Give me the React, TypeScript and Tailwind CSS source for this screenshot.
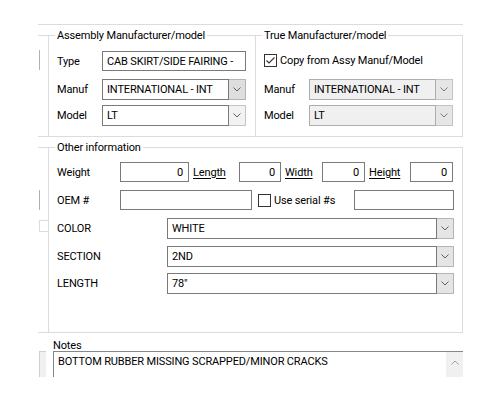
import React from "react";

const Chevron = ({ color = "#606060" }: { color?: string }) => (
  <svg width="8" height="5" viewBox="0 0 8 5">
    <polyline points="0.5,0.5 4,4 7.5,0.5" fill="none" stroke={color} strokeWidth="1" />
  </svg>
);

const CheckBox = ({ checked }: { checked?: boolean }) => (
  <div className="w-[13px] h-[13px] border border-[#333333] bg-white flex items-center justify-center shrink-0">
    {checked && (
      <svg width="11" height="11" viewBox="0 0 11 11">
        <polyline points="1.5,5.5 4,8 9.5,2.5" fill="none" stroke="#333333" strokeWidth="1.1" />
      </svg>
    )}
  </div>
);

type ComboProps = {
  value: string;
  size: string;
  disabled?: boolean;
  btn?: string;
};

const Combo = ({ value, size, disabled, btn }: ComboProps) => (
  <div className={`flex ${size}`}>
    <div
      className={`flex-1 flex items-center pl-[4px] border ${
        disabled ? "bg-[#f0f0f0] border-[#adadad]" : "bg-white border-[#7a7a7a]"
      }`}
    >
      {value}
    </div>
    <div
      className={`w-[17px] flex items-center justify-center border-y border-r ${
        btn ?? "bg-[#e5e5e5] border-[#b4b4b4]"
      }`}
    >
      <Chevron color={disabled ? "#7a7a7a" : "#606060"} />
    </div>
  </div>
);

const NumBox = ({ size }: { size: string }) => (
  <div className={`flex items-center justify-end pr-[5px] border border-[#7a7a7a] bg-white ${size}`}>0</div>
);

const GroupLabel = ({ text }: { text: string }) => (
  <div className="-mt-[8px] ml-[6px] h-[15px] w-fit px-[2px] bg-white flex items-center">{text}</div>
);

export default function App() {
  return (
    <div className="w-[500px] h-[400px] bg-white overflow-hidden text-[11px] leading-none text-black font-['Roboto',sans-serif] tracking-[-0.15px] pt-[24px] pl-[38px]">
      <div className="w-[425px]">
        {/* top rule */}
        <div className="h-[11px] border-t border-[#dcdcdc]" />

        {/* manufacturer groups */}
        <div className="flex h-[101px] border-t border-[#dcdcdc]">
          <div className="w-[10px]">
            <div className="mt-[14px] ml-[1px] w-px h-[20px] bg-[#b0b0b0]" />
          </div>

          <div className="w-[207px] border-l border-[#dcdcdc]">
            <GroupLabel text="Assembly Manufacturer/model" />
            <div className="pl-[8px]">
              <div className="mt-[8px] flex items-center h-[20px]">
                <div className="w-[45px]">Type</div>
                <div className="w-[144px] h-[20px] flex items-center pl-[4px] border border-[#7a7a7a] bg-white whitespace-nowrap overflow-hidden">
                  CAB SKIRT/SIDE FAIRING -
                </div>
              </div>
              <div className="mt-[8px] flex items-center h-[21px]">
                <div className="w-[45px]">Manuf</div>
                <Combo value="INTERNATIONAL - INT" size="w-[144px] h-[21px]" btn="bg-[#dedede] border-[#b4b4b4]" />
              </div>
              <div className="mt-[5px] flex items-center h-[21px]">
                <div className="w-[45px]">Model</div>
                <Combo value="LT" size="w-[144px] h-[21px]" btn="bg-[#f2f2f2] border-[#c4c4c4]" />
              </div>
            </div>
          </div>

          <div className="w-[208px] border-l border-r border-[#dcdcdc]">
            <GroupLabel text="True Manufacturer/model" />
            <div className="pl-[8px]">
              <div className="mt-[11px] flex items-center h-[13px]">
                <CheckBox checked />
                <div className="ml-[3px]">Copy from Assy Manuf/Model</div>
              </div>
              <div className="mt-[12px] flex items-center h-[21px]">
                <div className="w-[45px]">Manuf</div>
                <Combo value="INTERNATIONAL - INT" size="w-[144px] h-[21px]" disabled btn="bg-[#e6e6e6] border-[#c4c4c4]" />
              </div>
              <div className="mt-[5px] flex items-center h-[21px]">
                <div className="w-[45px]">Model</div>
                <Combo value="LT" size="w-[144px] h-[21px]" disabled btn="bg-[#e6e6e6] border-[#c4c4c4]" />
              </div>
            </div>
          </div>
        </div>

        {/* spacer rule */}
        <div className="h-[11px] border-t border-[#dcdcdc]" />

        {/* other information */}
        <div className="flex h-[185px] border-t border-[#dcdcdc]">
          <div className="w-[10px]">
            <div className="mt-[42px] ml-[1px] w-px h-[20px] bg-[#b0b0b0]" />
            <div className="mt-[10px] ml-[1px] h-[12px] border-t border-b border-l border-[#dcdcdc]" />
          </div>

          <div className="w-[415px] border-l border-r border-[#dcdcdc]">
            <GroupLabel text="Other information" />
            <div className="pl-[8px] pr-[8px]">
              <div className="mt-[7px] flex items-center h-[20px]">
                <div className="w-[63px]">Weight</div>
                <NumBox size="w-[69px] h-[20px]" />
                <div className="ml-[4px] w-[46px] underline underline-offset-2">Length</div>
                <NumBox size="w-[42px] h-[20px]" />
                <div className="ml-[4px] w-[37px] underline underline-offset-2">Width</div>
                <NumBox size="w-[43px] h-[20px]" />
                <div className="ml-[4px] w-[41px] underline underline-offset-2">Height</div>
                <NumBox size="w-[43px] h-[20px]" />
              </div>

              <div className="mt-[8px] flex items-center h-[20px]">
                <div className="w-[63px]">OEM #</div>
                <div className="w-[132px] h-[20px] border border-[#7a7a7a] bg-white" />
                <div className="ml-[6px]">
                  <CheckBox />
                </div>
                <div className="ml-[3px]">Use serial #s</div>
                <div className="ml-auto w-[100px] h-[20px] border border-[#7a7a7a] bg-white" />
              </div>

              <div className="mt-[8px] flex items-center h-[21px]">
                <div className="w-[110px]">COLOR</div>
                <Combo value="WHITE" size="w-[287px] h-[21px]" />
              </div>
              <div className="mt-[7px] flex items-center h-[21px]">
                <div className="w-[110px]">SECTION</div>
                <Combo value="2ND" size="w-[287px] h-[21px]" />
              </div>
              <div className="mt-[6px] flex items-center h-[21px]">
                <div className="w-[110px]">LENGTH</div>
                <Combo value={'78"'} size="w-[287px] h-[21px]" />
              </div>
            </div>
          </div>
        </div>

        {/* notes */}
        <div className="flex border-t border-[#dcdcdc]">
          <div className="w-[15px]">
            <div className="mt-[18px] ml-[1px] w-[7px] h-[26px] bg-[#f0f0f0] border-l border-t border-[#cfcfcf]" />
          </div>
          <div className="w-[410px]">
            <div className="h-[18px] pt-[6px] flex items-center">Notes</div>
            <div className="h-[26px] flex border-t border-l border-[#828790] bg-white">
              <div className="flex-1 pl-[4px] pt-[4px] whitespace-nowrap">
                BOTTOM RUBBER MISSING SCRAPPED/MINOR CRACKS
              </div>
              <div className="w-[17px] bg-[#f0f0f0] flex justify-center pt-[8px]">
                <svg width="8" height="5" viewBox="0 0 8 5">
                  <polyline points="0.5,4.5 4,1 7.5,4.5" fill="none" stroke="#a3a3a3" strokeWidth="1" />
                </svg>
              </div>
            </div>
          </div>
        </div>
      </div>
    </div>
  );
}
